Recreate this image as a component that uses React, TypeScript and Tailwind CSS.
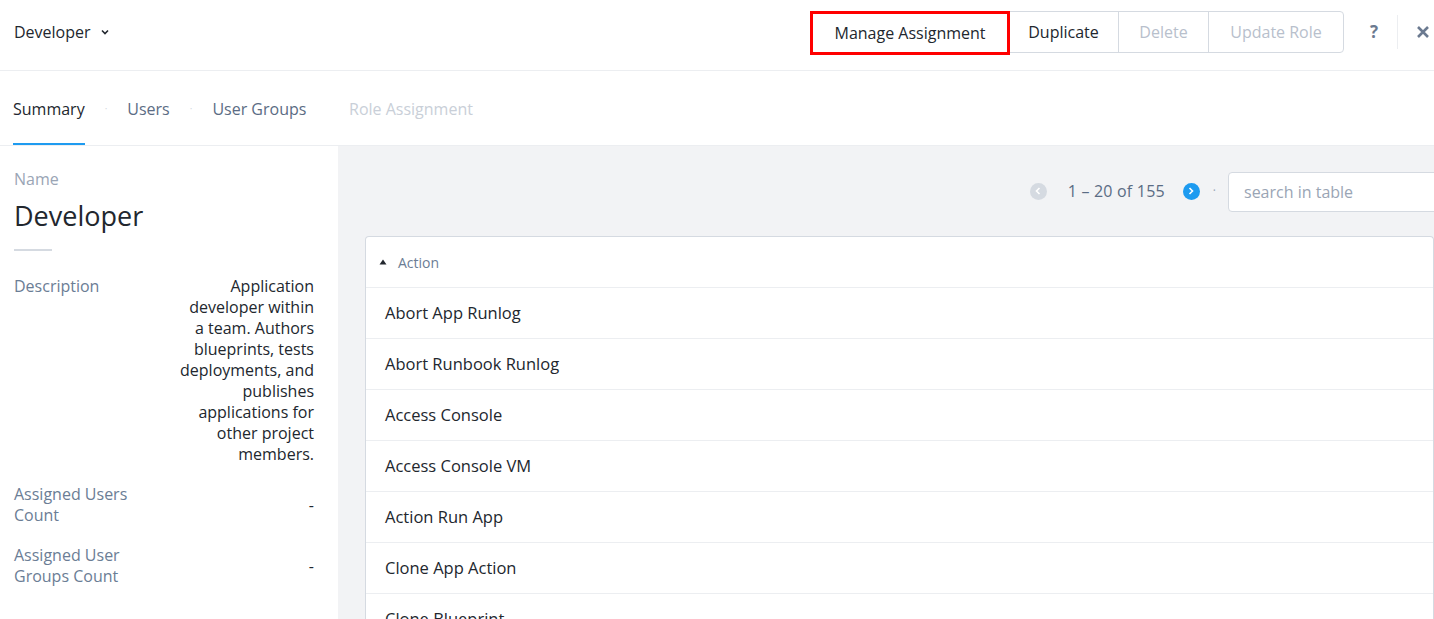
const rows = [
  'Abort App Runlog',
  'Abort Runbook Runlog',
  'Access Console',
  'Access Console VM',
  'Action Run App',
  'Clone App Action',
  'Clone Blueprint',
  'Create App',
];

function Dot() {
  return <span className="mx-[20px] text-[#d5dae1] text-[10px]">·</span>;
}

export default function App() {
  return (
    <div
      className="w-[1434px] h-[619px] overflow-hidden bg-white text-[#22272e] flex flex-col"
      style={{ fontFamily: '"Open Sans", "Liberation Sans", sans-serif' }}
    >
      {/* Header */}
      <div className="h-[71px] shrink-0 flex items-center border-b border-[#eceef1] pl-[14px] pb-[7px]">
        <div className="flex items-center gap-[10px] text-[16px] font-medium text-[#22272e]">
          Developer
          <svg width="8" height="6" viewBox="0 0 8 6" className="mt-[1px]">
            <path d="M1 1.5 4 4.5 7 1.5" fill="none" stroke="#22272e" strokeWidth="1.6" />
          </svg>
        </div>
        <div className="ml-auto flex items-center h-[42px]">
          <div className="flex h-[42px] border border-[#d5dae1] rounded-[4px]">
            <button className="text-[16px] text-[#22272e] border-[3px] border-[#ff0000] -m-px h-[44px] w-[200px]">
              Manage Assignment
            </button>
            <button className="w-[110px] text-[16px] text-[#22272e] border-r border-[#d5dae1]">
              Duplicate
            </button>
            <button className="w-[90px] text-[16px] text-[#b8c0cc] border-r border-[#d5dae1]">
              Delete
            </button>
            <button className="w-[134px] text-[16px] text-[#b8c0cc]">Update Role</button>
          </div>
          <span className="ml-[25px] w-[10px] text-center text-[17px] font-bold text-[#6b7a90]">?</span>
          <span className="ml-[18px] h-[34px] w-px bg-[#eceef1]" />
          <svg width="14" height="14" viewBox="0 0 14 14" className="ml-[18px] mr-[4px]">
            <path d="M2 2 12 12M12 2 2 12" stroke="#6b7a90" strokeWidth="2.6" />
          </svg>
        </div>
      </div>

      {/* Tabs */}
      <div className="h-[75px] shrink-0 flex items-stretch pl-[13px] border-b border-[#eceef1]">
        <div className="flex items-center text-[16px]">
          <div className="h-full flex items-center border-b-[2px] border-[#1e9bf0] text-[#22272e] pt-[4px]">
            Summary
          </div>
          <Dot />
          <div className="text-[#5b6c84] pt-[2px]">Users</div>
          <Dot />
          <div className="text-[#5b6c84] pt-[2px]">User Groups</div>
          <span className="mx-[20px] text-transparent text-[10px]">·</span>
          <div className="text-[#c9cfd8] pt-[2px]">Role Assignment</div>
        </div>
      </div>

      <div className="flex flex-1 min-h-0">
        {/* Left summary */}
        <div className="w-[338px] shrink-0 pl-[14px] pr-[24px] pt-[22px]">
          <div className="text-[16px] text-[#9aa5b5] leading-[22px]">Name</div>
          <div className="text-[27px] text-[#22272e] leading-[36px] mt-[8px]">Developer</div>
          <div className="w-[38px] h-[2px] bg-[#d5dae1] mt-[15px]" />
          <div className="flex justify-between mt-[25px] text-[16px] leading-[21px]">
            <div className="text-[#6b7d95]">Description</div>
            <div className="w-[137px] text-right text-[#22272e]">
              Application developer within a team. Authors blueprints, tests deployments, and publishes
              applications for other project members.
            </div>
          </div>
          <div className="flex justify-between items-center mt-[19px] text-[16px] leading-[21px]">
            <div className="text-[#6b7d95] w-[130px]">Assigned Users Count</div>
            <div>-</div>
          </div>
          <div className="flex justify-between items-center mt-[19px] text-[16px] leading-[21px]">
            <div className="text-[#6b7d95] w-[130px]">Assigned User Groups Count</div>
            <div>-</div>
          </div>
        </div>

        {/* Right table area */}
        <div className="flex-1 bg-[#f2f3f5] pl-[27px] flex flex-col min-w-0">
          <div className="h-[90px] shrink-0 flex items-center justify-end -mr-[30px]">
            <span className="w-[17px] h-[17px] rounded-full bg-[#d5dae1] flex items-center justify-center">
              <svg width="6" height="8" viewBox="0 0 6 8">
                <path d="M4.5 1 1.5 4 4.5 7" fill="none" stroke="#fff" strokeWidth="1.6" />
              </svg>
            </span>
            <span className="ml-[21px] text-[16px] text-[#5b6c84] tracking-[0.2px]">1 – 20 of 155</span>
            <span className="ml-[18px] w-[17px] h-[17px] rounded-full bg-[#1e9bf0] flex items-center justify-center">
              <svg width="6" height="8" viewBox="0 0 6 8">
                <path d="M1.5 1 4.5 4 1.5 7" fill="none" stroke="#fff" strokeWidth="1.6" />
              </svg>
            </span>
            <span className="ml-[13px] text-[#9aa5b5] text-[12px]">·</span>
            <div className="ml-[12px] w-[236px] h-[40px] bg-white border border-[#d5dae1] rounded-[4px] flex items-center pl-[15px] text-[16px] text-[#9aa5b5] mt-[2px]">
              search in table
            </div>
          </div>
          <div className="flex-1 bg-white border-t border-l border-r border-[#d5dae1] rounded-t-[4px]">
            <div className="h-[51px] flex items-center pl-[13px] border-b border-[#eceef1]">
              <svg width="8" height="6" viewBox="0 0 8 6">
                <path d="M4 0.5 7.5 5.5H0.5Z" fill="#22272e" />
              </svg>
              <span className="ml-[11px] text-[14px] text-[#6b7d95]">Action</span>
            </div>
            {rows.map((r) => (
              <div
                key={r}
                className="h-[51px] flex items-center pl-[19px] border-b border-[#eceef1] text-[16.5px] text-[#22272e]"
              >
                {r}
              </div>
            ))}
          </div>
        </div>
      </div>
    </div>
  );
}
